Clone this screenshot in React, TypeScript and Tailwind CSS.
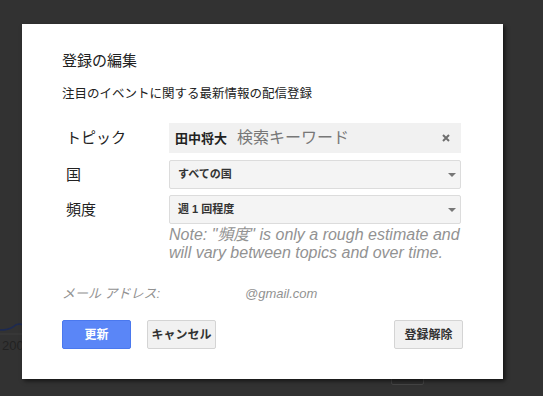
import React from "react";

const jp = { fontFamily: '"Liberation Sans", "Noto Sans CJK JP", sans-serif' };

function Arrow() {
  return (
    <svg width="8" height="4" viewBox="0 0 8 4" className="shrink-0">
      <polygon points="0,0 8,0 4,4" fill="#777" />
    </svg>
  );
}

function Select({ label }: { label: string }) {
  return (
    <div className="flex h-[29px] w-[292px] items-center justify-between rounded-[2px] border border-[#dcdcdc] bg-[#f4f4f4] pl-[8px] pr-[4px]">
      <span className="text-[11px] font-bold leading-none text-[#333]">{label}</span>
      <Arrow />
    </div>
  );
}

export default function App() {
  return (
    <div className="relative h-[396px] w-[543px] overflow-hidden bg-[#323232]" style={jp}>
      {/* background page remnants */}
      <svg className="absolute left-0 top-[318px]" width="30" height="20" viewBox="0 0 30 20">
        <path d="M0 12 C6 12 10 11 13 9 C15 7 17 6 19 6 C22 6 25 8 30 8" stroke="#1d2a52" strokeWidth="1.6" fill="none" />
        <line x1="0" y1="16" x2="30" y2="16" stroke="#3c3c3c" strokeWidth="1" />
      </svg>
      <div className="absolute left-[2px] top-[339px] text-[13px] leading-none text-[#222]" style={{ fontFamily: '"Liberation Sans", sans-serif' }}>
        2009
      </div>
      <div className="absolute left-[391px] top-[372px] h-[13px] w-[33px] rounded-[2px] border border-[#444] bg-[#2e2e2e]" />

      {/* dialog */}
      <div className="absolute left-[22px] top-[24px] flex h-[355px] w-[481px] flex-col bg-white px-[40px] pt-[27px] shadow-[2px_2px_4px_rgba(0,0,0,0.6)]">
        <div className="text-[15px] leading-[20px] text-[#222]">登録の編集</div>
        <div className="mt-[14px] text-[12.5px] leading-[18px] text-[#222]">注目のイベントに関する最新情報の配信登録</div>

        <div className="mt-[20px] flex items-center">
          <div className="w-[107px] pl-[4px] text-[15px] leading-[20px] text-[#222]">トピック</div>
          <div className="flex h-[30px] w-[292px] items-center bg-[#f1f1f1] pl-[6px] pr-[11px]">
            <span className="text-[13px] font-bold leading-none text-[#222]">田中将大</span>
            <span className="ml-[10px] text-[16px] leading-none text-[#777]">検索キーワード</span>
            <span className="ml-auto">
              <svg width="8" height="8" viewBox="0 0 8 8">
                <path d="M1 1 L7 7 M7 1 L1 7" stroke="#6f6f6f" strokeWidth="2" />
              </svg>
            </span>
          </div>
        </div>

        <div className="mt-[7px] flex items-center">
          <div className="w-[107px] pl-[4px] text-[15px] leading-[20px] text-[#222]">国</div>
          <Select label="すべての国" />
        </div>

        <div className="mt-[6px] flex items-center">
          <div className="w-[107px] pl-[4px] text-[15px] leading-[20px] text-[#222]">頻度</div>
          <Select label="週 1 回程度" />
        </div>

        <div className="ml-[107px] mt-[2px] w-[300px] text-[16px] italic leading-[18px] text-[#929292]">
          Note: "頻度" is only a rough estimate and will vary between topics and over time.
        </div>

        <div className="mt-[23px] flex items-center text-[13px] italic leading-[18px] text-[#929292]">
          <span className="w-[183px]">メール アドレス:</span>
          <span>@gmail.com</span>
        </div>

        <div className="mt-[17px] flex items-center">
          <button className="flex h-[29px] w-[69px] items-center justify-center rounded-[2px] border border-[#4a78ee] bg-[#5a86f7] text-[12px] font-bold text-white">
            更新
          </button>
          <button className="ml-[16px] flex h-[29px] w-[69px] items-center justify-center rounded-[2px] border border-[#d4d4d4] bg-[#f1f1f1] text-[12px] font-bold text-[#333]">
            キャンセル
          </button>
          <button className="ml-auto flex h-[29px] w-[69px] items-center justify-center rounded-[2px] border border-[#d4d4d4] bg-[#f1f1f1] text-[12px] font-bold text-[#333]">
            登録解除
          </button>
        </div>
      </div>
    </div>
  );
}
